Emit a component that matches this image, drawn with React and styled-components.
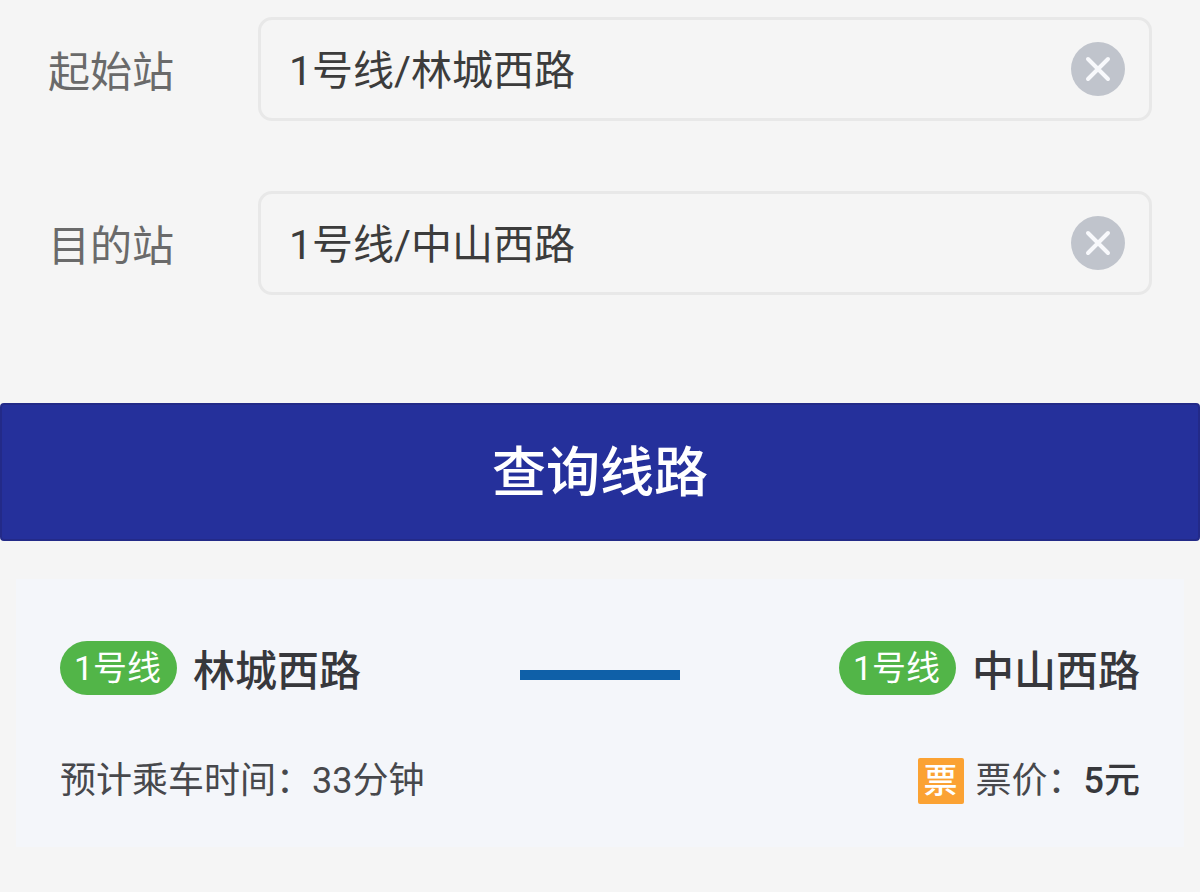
import { useState } from 'react'
import styled, { createGlobalStyle } from 'styled-components'

const numberFont = "Roboto, 'Noto Sans CJK SC', sans-serif"

const GlobalStyle = createGlobalStyle`
  * {
    box-sizing: border-box;
  }

  body {
    margin: 0;
    background: #f5f5f5;
    color: #37383c;
    font-family: 'Noto Sans CJK SC', 'Noto Sans', sans-serif;
  }

  button, input {
    font-family: inherit;
  }
`

const SearchForm = styled.form`
  display: flex;
  flex-direction: column;
  padding-top: 17px;
`

const Field = styled.div`
  display: flex;
  align-items: center;
  margin-bottom: 70px;
  padding: 0 48px;
`

const Label = styled.label`
  flex: none;
  width: 210px;
  color: #6a6a6a;
  font-size: 42px;
  line-height: 56px;
`

const InputBox = styled.div`
  display: flex;
  flex: 1;
  align-items: center;
  min-width: 0;
  height: 104px;
  padding: 0 24px 0 28px;
  border: 3px solid #e8e8e8;
  border-radius: 14px;
`

const Input = styled.input`
  flex: 1;
  min-width: 0;
  height: 60px;
  padding: 0 0 4px;
  border: 0;
  outline: 0;
  background: transparent;
  color: #3c3c3c;
  font-family: ${numberFont};
  font-size: 41px;
`

const ClearButton = styled.button`
  display: flex;
  flex: none;
  align-items: center;
  justify-content: center;
  width: 54px;
  height: 54px;
  padding: 0;
  border: 0;
  border-radius: 50%;
  background: #c0c4cc;
  cursor: pointer;
`

const SubmitButton = styled.button`
  width: 100%;
  height: 138px;
  margin-top: 38px;
  padding: 0 0 8px;
  border: 2px solid #232a88;
  border-radius: 4px;
  background: #25309b;
  color: #fff;
  font-size: 54px;
  font-weight: 500;
  cursor: pointer;
`

const Result = styled.section`
  display: flex;
  flex-direction: column;
  gap: 55px;
  margin: 38px 16px;
  padding: 61px 44px 36px;
  background: #f4f6fa;
`

const Row = styled.div`
  display: flex;
  align-items: center;
  justify-content: space-between;
`

const Stop = styled.div`
  display: flex;
  align-items: center;
  gap: 16px;
`

const LineTag = styled.span`
  padding: 0 16px 0 14px;
  border-radius: 27px;
  background: #52b548;
  color: #fff;
  font-family: ${numberFont};
  font-size: 34px;
  line-height: 54px;
`

const StopName = styled.span`
  font-size: 42px;
  font-weight: 500;
  line-height: 56px;
`

const Connector = styled.span`
  width: 160px;
  height: 10px;
  margin-top: 14px;
  background: #0f60a8;
`

const Info = styled.span`
  display: flex;
  align-items: center;
  color: #47484c;
  font-family: ${numberFont};
  font-size: 36px;
  line-height: 60px;
`

const TicketIcon = styled.span`
  width: 46px;
  height: 46px;
  margin-right: 12px;
  border-radius: 2px;
  background: #fba233;
  color: #fff;
  font-size: 34px;
  font-weight: 500;
  line-height: 46px;
  text-align: center;
`

const Price = styled.strong`
  color: #37383c;
  font-weight: 500;
`

function StationField({ id, label, value, onChange }) {
  return (
    <Field>
      <Label htmlFor={id}>{label}</Label>
      <InputBox>
        <Input id={id} value={value} onChange={(e) => onChange(e.target.value)} />
        <ClearButton type="button" aria-label="清除" onClick={() => onChange('')}>
          <svg width="26" height="26" viewBox="0 0 26 26" fill="none" stroke="#f8f9fc" strokeWidth="4" strokeLinecap="round">
            <path d="M3 3L23 23M23 3L3 23" />
          </svg>
        </ClearButton>
      </InputBox>
    </Field>
  )
}

function RouteStop({ line, name }) {
  return (
    <Stop>
      <LineTag>{line}</LineTag>
      <StopName>{name}</StopName>
    </Stop>
  )
}

export default function App() {
  const [start, setStart] = useState('1号线/林城西路')
  const [end, setEnd] = useState('1号线/中山西路')

  return (
    <>
      <GlobalStyle />
      <SearchForm onSubmit={(e) => e.preventDefault()}>
        <StationField id="start" label="起始站" value={start} onChange={setStart} />
        <StationField id="end" label="目的站" value={end} onChange={setEnd} />
        <SubmitButton type="submit">查询线路</SubmitButton>
      </SearchForm>
      <Result>
        <Row>
          <RouteStop line="1号线" name="林城西路" />
          <Connector />
          <RouteStop line="1号线" name="中山西路" />
        </Row>
        <Row>
          <Info>预计乘车时间：33分钟</Info>
          <Info>
            <TicketIcon>票</TicketIcon>
            票价：<Price>5元</Price>
          </Info>
        </Row>
      </Result>
    </>
  )
}
